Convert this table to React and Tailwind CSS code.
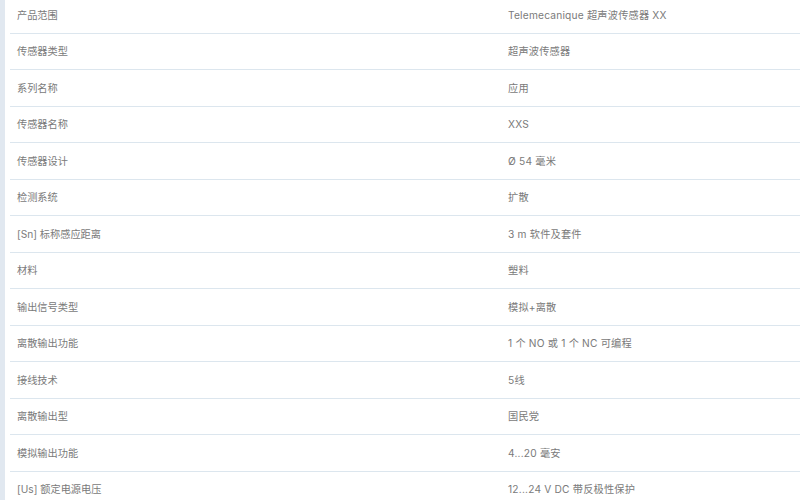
import React from "react";

const rows = [
  ["产品范围", "Telemecanique 超声波传感器 XX"],
  ["传感器类型", "超声波传感器"],
  ["系列名称", "应用"],
  ["传感器名称", "XXS"],
  ["传感器设计", "Ø 54 毫米"],
  ["检测系统", "扩散"],
  ["[Sn] 标称感应距离", "3 m 软件及套件"],
  ["材料", "塑料"],
  ["输出信号类型", "模拟+离散"],
  ["离散输出功能", "1 个 NO 或 1 个 NC 可编程"],
  ["接线技术", "5线"],
  ["离散输出型", "国民党"],
  ["模拟输出功能", "4...20 毫安"],
  ["[Us] 额定电源电压", "12...24 V DC 带反极性保护"],
];

export default function App() {
  return (
    <div
      className="w-[800px] h-[500px] overflow-hidden bg-white flex"
      style={{ fontFamily: '"Inter", "Noto Sans CJK SC", sans-serif' }}
    >
      <div className="w-[5px] shrink-0 bg-[#e1e8f0]" />
      <div className="flex-1 pl-[5px]">
        <div className="mt-[-3px]">
          {rows.map(([k, v], i) => (
            <div
              key={i}
              className="h-[36.5px] flex items-center border-b border-[#dce6ee] text-[10.2px] text-[#7a7a7a] pt-[1px]"
            >
              <div className="w-[498px] shrink-0 pl-[7px]">{k}</div>
              <div className="flex-1 tracking-[0.2px]">{v}</div>
            </div>
          ))}
        </div>
      </div>
    </div>
  );
}
